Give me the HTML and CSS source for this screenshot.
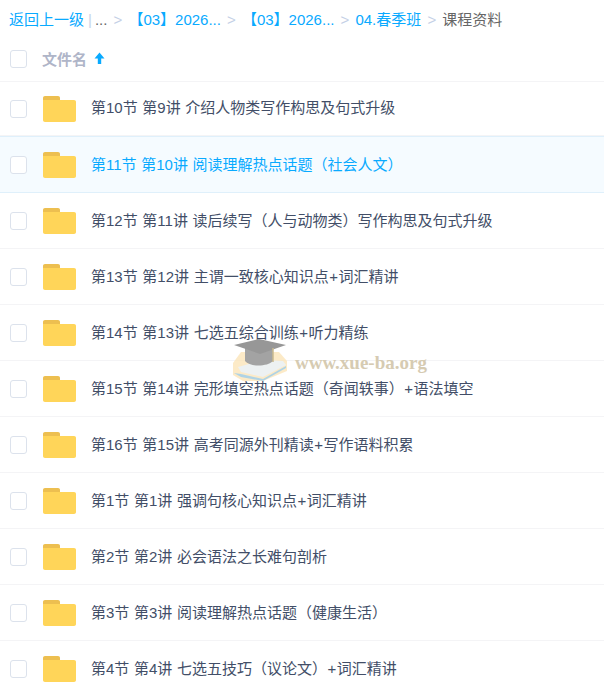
FILE: index.html
```html
<!DOCTYPE html>
<html lang="zh-CN">
<head>
<meta charset="utf-8">
<title>课程资料</title>
<link rel="stylesheet" href="styles.css">
</head>
<body>
<svg class="defs" width="0" height="0" aria-hidden="true">
  <symbol id="folder" viewBox="0 0 33 26">
    <path d="M2 0h13c1.200 0 2 .8 2 2v2H0V2C0 .8.800 0 2 0z" fill="#EDBF50"/>
    <path d="M0 4h31c1.200 0 2 .8 2 2v18c0 1.200-.8 2-2 2H2c-1.200 0-2-.8-2-2z" fill="#FFD559"/>
  </symbol>
</svg>
<main class="page">
  <nav class="crumbs">
    <a class="link">返回上一级</a><span class="bar">|</span><span class="more">...</span><span class="sep">&gt;</span>
    <a class="link">【03】2026...</a><span class="sep">&gt;</span>
    <a class="link">【03】2026...</a><span class="sep">&gt;</span>
    <a class="link">04.春季班</a><span class="sep">&gt;</span>
    <span class="current">课程资料</span>
  </nav>
  <div class="head">
    <span class="check"></span>
    <span class="head-name">文件名</span>
    <svg class="arrow" width="11" height="12" viewBox="0 0 11 12"><path d="M5.500 .5 10.500 6.500H7.200V12H3.800V6.500H.5z" fill="#09AAFF"/></svg>
  </div>
  <ul class="list">
    <li class="row first"><span class="check"></span><svg class="folder"><use href="#folder"/></svg><span class="name">第10节 第9讲 介绍人物类写作构思及句式升级</span></li>
    <li class="row active"><span class="check"></span><svg class="folder"><use href="#folder"/></svg><span class="name">第11节 第10讲 阅读理解热点话题（社会人文）</span></li>
    <li class="row"><span class="check"></span><svg class="folder"><use href="#folder"/></svg><span class="name">第12节 第11讲 读后续写（人与动物类）写作构思及句式升级</span></li>
    <li class="row"><span class="check"></span><svg class="folder"><use href="#folder"/></svg><span class="name">第13节 第12讲 主谓一致核心知识点<span class="plus">+</span>词汇精讲</span></li>
    <li class="row"><span class="check"></span><svg class="folder"><use href="#folder"/></svg><span class="name">第14节 第13讲 七选五综合训练<span class="plus">+</span>听力精练</span></li>
    <li class="row"><span class="check"></span><svg class="folder"><use href="#folder"/></svg><span class="name">第15节 第14讲 完形填空热点话题（奇闻轶事）<span class="plus">+</span>语法填空</span></li>
    <li class="row"><span class="check"></span><svg class="folder"><use href="#folder"/></svg><span class="name">第16节 第15讲 高考同源外刊精读<span class="plus">+</span>写作语料积累</span></li>
    <li class="row"><span class="check"></span><svg class="folder"><use href="#folder"/></svg><span class="name">第1节 第1讲 强调句核心知识点<span class="plus">+</span>词汇精讲</span></li>
    <li class="row"><span class="check"></span><svg class="folder"><use href="#folder"/></svg><span class="name">第2节 第2讲 必会语法之长难句剖析</span></li>
    <li class="row"><span class="check"></span><svg class="folder"><use href="#folder"/></svg><span class="name">第3节 第3讲 阅读理解热点话题（健康生活）</span></li>
    <li class="row"><span class="check"></span><svg class="folder"><use href="#folder"/></svg><span class="name">第4节 第4讲 七选五技巧（议论文）<span class="plus">+</span>词汇精讲</span></li>
  </ul>
  <div class="mark">
    <svg class="mark-logo" width="54" height="42" viewBox="0 0 54 42">
      <path d="M0 24 8 13h38l8 9v10L30 42H10L0 36z" fill="#FBE3B4" opacity=".75"/>
      <path d="M5 28 30 21l20 1 3 4-23 12L8 33z" fill="#EDF1F2"/>
      <path d="M1 34 8 35l22 5 23-13v2L30 42 8 38z" fill="#A6D0E8" opacity=".9"/>
      <path d="M12 9v13c5 6 22 6 28 0V9z" fill="#A3A3A3"/>
      <path d="M1 6 26 0l27 6-26 9z" fill="#979797"/>
      <path d="M40 9v14" stroke="#C9B98E" stroke-width="1.500"/>
    </svg>
    <span class="mark-text">www.xue-ba.org</span>
  </div>
</main>
</body>
</html>
```
FILE: styles.css
```css
* { box-sizing: border-box; }
html, body { margin: 0; padding: 0; background: #fff; }
body {
  font-family: "Liberation Sans", "Noto Sans CJK SC", sans-serif;
  font-size: 15px;
  color: #424E67;
  height: 686px;
  overflow: hidden;
}
.defs { position: absolute; }
.page { position: relative; width: 604px; }
.crumbs {
  height: 37px;
  padding: 10px 0 0 9px;
  line-height: 19px;
  display: flex;
  white-space: nowrap;
}
.link { color: #09AAFF; }
.bar { color: #C7D3E6; margin: 0 3px 0 4px; }
.more { color: #666; }
.sep { color: #C4D0E6; margin: 0 6.100px; }
.current { color: #666; }
.head {
  height: 45px;
  display: flex;
  align-items: center;
  padding: 0 0 1px 10px;
  border-bottom: 1px solid #F4F4F6;
}
.check {
  flex: none;
  width: 17px;
  height: 18px;
  border: 1px solid #DCE2EC;
  border-radius: 3px;
  background: #fff;
}
.head-name {
  margin: 0 0 0 15px;
  font-weight: 700;
  color: #AFB5C8;
}
.arrow { margin: -1px 0 0 7px; }
.list { list-style: none; margin: 0; padding: 0; }
.row {
  height: 56px;
  display: flex;
  align-items: center;
  padding-left: 10px;
  border-bottom: 1px solid #F4F4F6;
}
.row.first { height: 54px; }
.row.active {
  background: #F5FBFF;
  border-top: 1px solid #DFF0FB;
  border-bottom: 1px solid #DFF0FB;
  height: 57px;
}
.row.active .name { color: #09AAFF; }
.folder { flex: none; width: 33px; height: 26px; margin-left: 16px; }
.name { margin: -3px 0 0 15px; white-space: nowrap; word-spacing: .5px; }
.row.first .name { margin-top: -4px; }
.plus { margin: 0 .5px; }
.mark {
  position: absolute;
  left: 233px;
  top: 339px;
  display: flex;
  align-items: center;
  pointer-events: none;
}
.mark-text {
  margin: 6px 0 0 8px;
  font-family: "Liberation Serif", serif;
  font-size: 19px;
  font-weight: 700;
  color: #D6CBB2;
  white-space: nowrap;
}
```
